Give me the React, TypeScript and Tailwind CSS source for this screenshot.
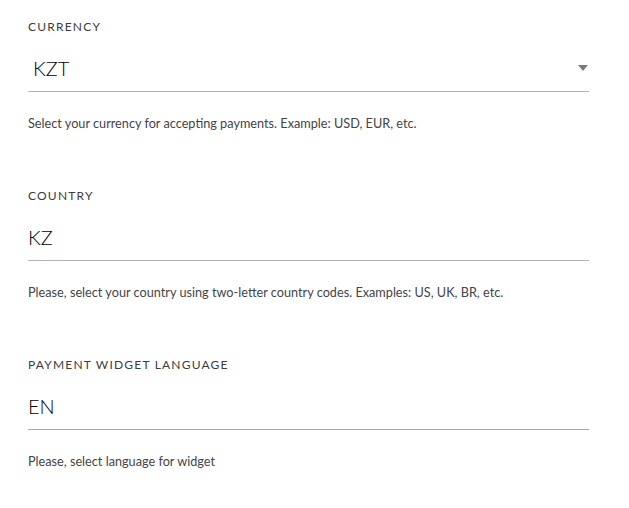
const fields = [
  {
    label: "Currency",
    value: "KZT",
    help: "Select your currency for accepting payments. Example: USD, EUR, etc.",
    select: true,
    line: "border-[#b5b5b5]",
  },
  {
    label: "Country",
    value: "KZ",
    help: "Please, select your country using two-letter country codes. Examples: US, UK, BR, etc.",
    select: false,
    line: "border-[#b5b5b5]",
  },
  {
    label: "Payment widget language",
    value: "EN",
    help: "Please, select language for widget",
    select: false,
    line: "border-[#ef8f74]",
  },
];

export default function App() {
  return (
    <div className="w-[629px] h-[508px] bg-white pl-[28px] pr-[40px] pt-[19px] font-['Lato',sans-serif] text-[#222]">
      {fields.map((f) => (
        <div key={f.label} className="h-[169px]">
          <div className="text-[12px] leading-[16px] uppercase tracking-[0.1em] text-[#3c3c3c]">
            {f.label}
          </div>
          <div className={`mt-[12px] h-[45px] border-b ${f.line} flex items-center justify-between`}>
            <span className={`text-[20px] leading-[28px] pb-[2px] font-light text-black ${f.select ? "pl-[5px]" : ""}`}>
              {f.value}
            </span>
            {f.select && (
              <svg width="10" height="6" viewBox="0 0 10 6" className="mr-[1px] mb-[2px]">
                <path d="M0 0h10L5 6z" fill="#7a7a7a" />
              </svg>
            )}
          </div>
          <p className="mt-[23px] text-[12.7px] leading-[16px] text-[#444]">{f.help}</p>
        </div>
      ))}
    </div>
  );
}
